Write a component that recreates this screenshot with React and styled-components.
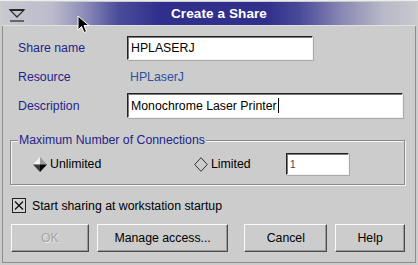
import React from "react"
import styled, { createGlobalStyle } from "styled-components"

const Global = createGlobalStyle`
  html, body { margin: 0; padding: 0; background: #cccccc; }
  * { box-sizing: border-box; }
`;

const Window = styled.div`
  position: relative;
  width: 418px;
  height: 265px;
  display: flex;
  flex-direction: column;
  background: #cccccc;
  font-family: "Liberation Sans", Arial, sans-serif;
  font-size: 12.3px;
  color: #000;
  border-top: 1px solid #ececec;
`;

const TitleBar = styled.div`
  position: relative;
  height: 24px;
  margin: 1px 2px 0;
  display: flex;
  align-items: center;
  justify-content: center;
  background: linear-gradient(to right, #c8c8d0 0%, #bcbccc 12%, #8c8cb8 20%, #4c4c9c 28%, #30308c 38%, #30308c 64%, #4a4a9a 72%, #8888b4 82%, #b8b8c8 92%, #c8c8ce 100%);
  border-bottom: 1px solid #e0e0e0;
`;

const MenuIcon = styled.svg`
  position: absolute;
  left: 6px;
  top: 4px;
`;

const Title = styled.span`
  color: #fff;
  font-weight: bold;
  font-size: 13.5px;
  margin-left: 20px;
  letter-spacing: 0.1px;
`;

const Client = styled.div`
  flex: 1;
  display: flex;
  flex-direction: column;
  margin: 0 2px 2px;
  padding: 0 10px 9px 7px;
  border: 1px solid #8c8c8c;
  border-top: none;
`;

const Form = styled.div`
  display: grid;
  grid-template-columns: 109px 1fr;
  grid-auto-rows: 25px;
  row-gap: 4px;
  margin-top: 9px;
  padding-left: 8px;
  align-items: center;
`;

const Label = styled.div`
  color: #24248a;
`;

const Value = styled.div`
  color: #2d4f9e;
  padding-left: 3px;
`;

const Field = styled.div`
  width: ${p => p.$w}px;
  height: ${p => p.$h || 25}px;
  display: flex;
  align-items: center;
  padding-left: 3px;
  background: #fff;
  border: 1px solid;
  border-color: #222 #f4f4f4 #f4f4f4 #222;
  box-shadow: inset 1px 1px 0 #7a7a7a, 1px 1px 0 #a8a8a8;
  font-size: ${p => p.$small ? "10px" : "inherit"};
  color: ${p => p.$small ? "#444" : "#000"};
`;

const Caret = styled.span`
  display: inline-block;
  width: 1px;
  height: 15px;
  background: #000;
  margin-left: 1px;
`;

const Group = styled.fieldset`
  margin: 15px 0 0;
  padding: 6px 0 9px 0;
  border: 1px solid #8a8a8a;
  box-shadow: 1px 1px 0 #f4f4f4, inset 1px 1px 0 #f4f4f4;
  min-width: 0;
`;

const Legend = styled.legend`
  position: relative;
  margin-left: 7px;
  padding: 0 1px;
  line-height: 14px;
  color: #24248a;
  background: #cccccc;
`;

const OptionRow = styled.div`
  display: flex;
  align-items: center;
  height: 22px;
  padding-left: 22px;
`;

const Option = styled.div`
  width: ${p => p.$w}px;
  display: flex;
  align-items: center;
  gap: 3px;
`;

const CheckRow = styled.div`
  display: flex;
  align-items: center;
  gap: 6px;
  margin: 13px 0 0 2px;
  height: 15px;
`;

const Box = styled.svg`
  flex: none;
`;

const Buttons = styled.div`
  display: flex;
  margin: 11px 0 0 1px;
`;

const Button = styled.div`
  width: ${p => p.$w}px;
  height: 28px;
  margin-left: ${p => p.$gap || 0}px;
  display: flex;
  align-items: center;
  justify-content: center;
  background: #cccccc;
  border: 1px solid;
  border-color: #fafafa #4a4a4a #4a4a4a #fafafa;
  box-shadow: inset -1px -1px 0 #9a9a9a;
  color: ${p => p.$disabled ? "#a4a4a4" : "#000"};
  text-shadow: ${p => p.$disabled ? "1px 1px 0 #e6e6e6" : "none"};
`;

const Pointer = styled.svg`
  position: absolute;
  left: 77px;
  top: 14px;
`;

const RadioOn = () => (
  <svg width="14" height="15" viewBox="0 0 14 15">
    <polygon points="0,7.5 7,0 7,7.5" fill="#f2f2f2" />
    <polygon points="7,0 14,7.5 7,7.5" fill="#9a9a9a" />
    <polygon points="0,7.5 7,15 7,7.5" fill="#3a3a3a" />
    <polygon points="14,7.5 7,15 7,7.5" fill="#000" />
  </svg>
);

const RadioOff = () => (
  <svg width="14" height="15" viewBox="0 0 14 15">
    <polygon points="7,0.7 13.3,7.5 7,14.3 0.7,7.5" fill="none" stroke="#333" strokeWidth="1" />
  </svg>
);

export default function App() {
  return (
    <Window>
      <Global />
      <TitleBar>
        <MenuIcon width="18" height="18" viewBox="0 0 18 18">
          <path d="M2 4 H16 L9 11 Z" fill="none" stroke="#333" strokeWidth="1.3" />
          <path d="M2 4 H16" stroke="#222" strokeWidth="1.8" />
          <path d="M2 15 H16" stroke="#333" strokeWidth="1.3" />
        </MenuIcon>
        <Title>Create a Share</Title>
      </TitleBar>
      <Client>
        <Form>
          <Label>Share name</Label>
          <Field $w={186} $h={24}>HPLASERJ</Field>
          <Label>Resource</Label>
          <Value>HPLaserJ</Value>
          <Label>Description</Label>
          <Field $w={276}>Monochrome Laser Printer<Caret /></Field>
        </Form>
        <Group>
          <Legend>Maximum Number of Connections</Legend>
          <OptionRow>
            <Option $w={161}><RadioOn />Unlimited</Option>
            <Option $w={92}><RadioOff />Limited</Option>
            <Field $w={63} $h={22} $small>1</Field>
          </OptionRow>
        </Group>
        <CheckRow>
          <Box width="14" height="15" viewBox="0 0 14 15">
            <rect x="0.5" y="0.5" width="13" height="14" fill="#d4d4d4" stroke="#222" />
            <path d="M3 3.5 L11 11.5 M11 3.5 L3 11.5" stroke="#111" strokeWidth="1.3" />
          </Box>
          Start sharing at workstation startup
        </CheckRow>
        <Buttons>
          <Button $w={78} $disabled>OK</Button>
          <Button $w={132} $gap={8}>Manage access...</Button>
          <Button $w={83} $gap={16}>Cancel</Button>
          <Button $w={70} $gap={8}>Help</Button>
        </Buttons>
      </Client>
      <Pointer width="13" height="20" viewBox="0 0 13 20">
        <path d="M1 1 L1 15 L4.5 11.5 L7 17.5 L9.5 16.5 L7 10.5 L12 10.5 Z" fill="#000" stroke="#fff" strokeWidth="1" />
      </Pointer>
    </Window>
  );
}
